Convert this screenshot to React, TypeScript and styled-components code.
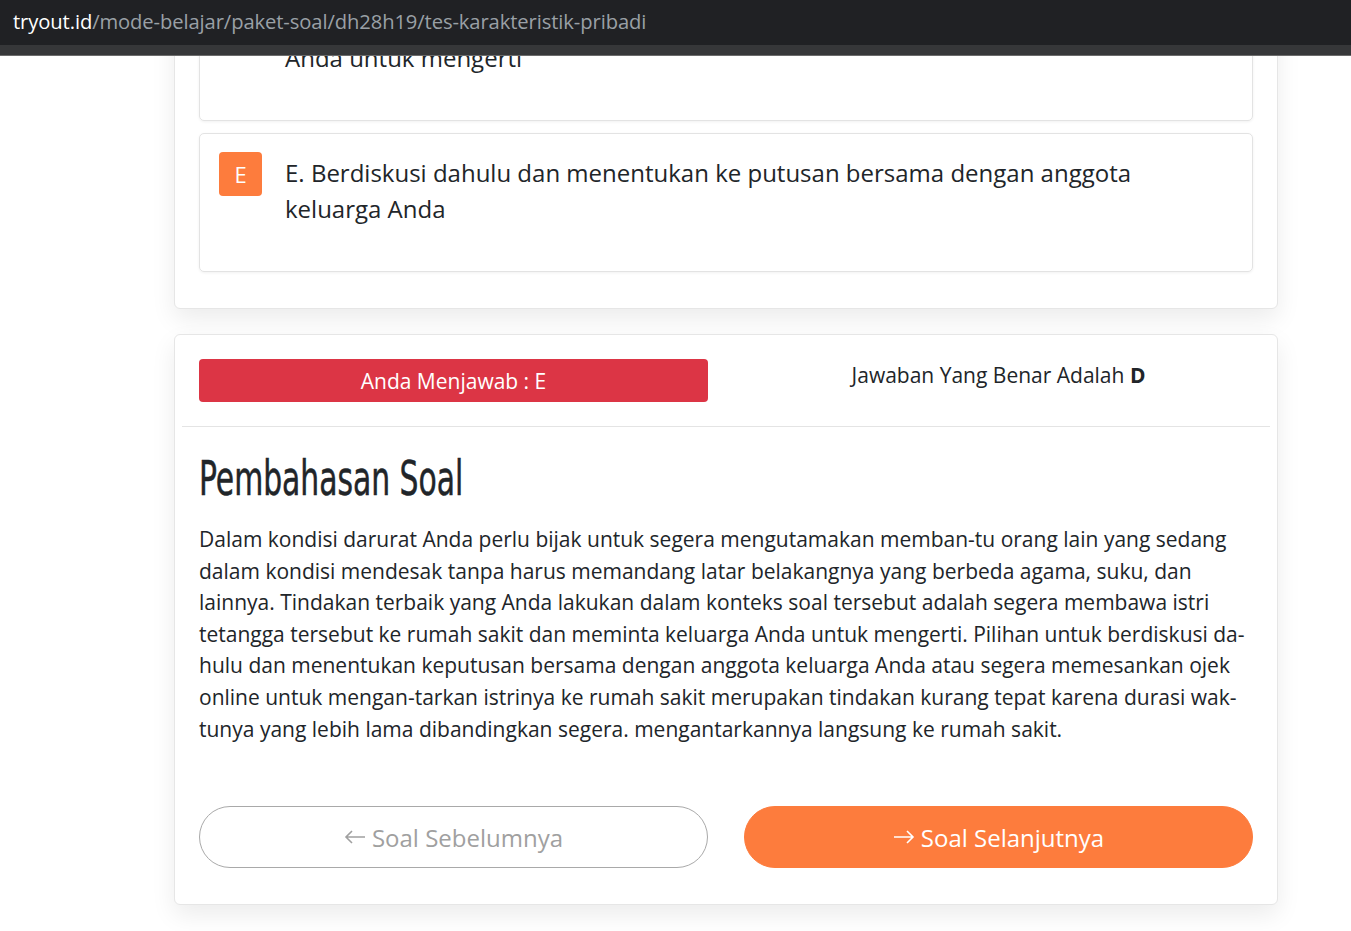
import { ReactNode, useLayoutEffect, useRef } from 'react';
import { createGlobalStyle, styled } from 'styled-components';

const GlobalStyle = createGlobalStyle`
  html, body {
    margin: 0;
    padding: 0;
    background: #fff;
    scroll-behavior: auto;
  }
  body {
    font-family: 'Open Sans', 'Noto Sans', sans-serif;
    color: #212529;
  }
  * {
    box-sizing: border-box;
  }
`;

const AddressBar = styled.div`
  position: fixed;
  top: 0;
  left: 0;
  right: 0;
  z-index: 10;
  height: 56px;
  background: #202124;
  border-bottom: 1px solid #6b6b6b;
  box-shadow: inset 0 -10px 0 #363739;
`;

const Url = styled.div`
  height: 42px;
  padding-left: 13px;
  display: flex;
  align-items: center;
  font-size: 20.2px;
  color: #9aa0a6;
  letter-spacing: -0.1px;
  span {
    color: #fff;
  }
`;

const Main = styled.main`
  width: 1104px;
  margin-left: 174px;
  padding: 120px 0 60px;
  display: flex;
  flex-direction: column;
  gap: 25px;
`;

const Card = styled.section<{ $bottom?: number }>`
  background: #fff;
  border: 1px solid #e6e6e6;
  border-radius: 6px;
  box-shadow: 0 10px 24px rgba(0, 0, 0, 0.08);
  padding: 24px 24px ${(p) => p.$bottom ?? 24}px;
`;

const QuestionHead = styled.h3`
  margin: 0 0 16px;
  font-size: 22px;
  font-weight: 600;
`;

const QuestionText = styled.p`
  margin: 0 0 24px;
  font-size: 21px;
  line-height: 34px;
`;

const Option = styled.div`
  display: flex;
  align-items: flex-start;
  gap: 23px;
  padding: 18px 20px 44px 19px;
  margin-bottom: 12px;
  border: 1px solid #e3e3e3;
  border-radius: 5px;
  box-shadow: 0 1px 3px rgba(0, 0, 0, 0.06);
`;

const Letter = styled.div<{ $active?: boolean }>`
  flex: 0 0 43px;
  height: 44px;
  border-radius: 4px;
  display: flex;
  align-items: center;
  justify-content: center;
  font-size: 22px;
  color: ${(p) => (p.$active ? '#fff' : '#212529')};
  background: ${(p) => (p.$active ? '#fd7c3d' : '#f1f1f1')};
`;

const OptionText = styled.div`
  margin-top: 3px;
  font-size: 24px;
  line-height: 36px;
  white-space: nowrap;
`;

const ResultRow = styled.div`
  display: grid;
  grid-template-columns: 1fr 1fr;
  gap: 36px;
  align-items: start;
`;

const Answered = styled.div`
  height: 43px;
  border-radius: 4px;
  background: #dc3545;
  color: #fff;
  font-size: 21px;
  display: flex;
  align-items: center;
  justify-content: center;
`;

const Correct = styled.div`
  text-align: center;
  font-size: 21px;
  line-height: 32px;
  b {
    font-weight: 700;
  }
`;

const Divider = styled.hr`
  border: 0;
  border-top: 1px solid #e4e4e4;
  margin: 24px -17px 23px;
`;

const Heading = styled.h2`
  margin: 0 0 17px;
  font-family: 'Liberation Sans Narrow', 'DejaVu Sans Condensed', 'Liberation Sans', sans-serif;
  font-size: 48px;
  font-weight: 400;
  line-height: 57px;
  color: #212529;
  -webkit-text-stroke: 0.5px #212529;
  display: inline-block;
  transform: scaleX(0.69);
  transform-origin: left center;
  white-space: nowrap;
`;

const Explanation = styled.p`
  margin: 0;
  font-size: 21px;
  line-height: 31.6px;
  white-space: nowrap;
`;

const Nav = styled.div`
  display: grid;
  grid-template-columns: 1fr 1fr;
  gap: 36px;
  margin-top: 61px;
`;

const NavButton = styled.button<{ $primary?: boolean }>`
  height: 62px;
  border-radius: 31px;
  font-family: 'Open Sans', sans-serif;
  font-size: 24px;
  cursor: pointer;
  display: flex;
  align-items: center;
  justify-content: center;
  gap: 6px;
  border: 1px solid ${(p) => (p.$primary ? '#fd7c3d' : '#a9a9a9')};
  background: ${(p) => (p.$primary ? '#fd7c3d' : '#fff')};
  color: ${(p) => (p.$primary ? '#fff' : '#a0a0a0')};
`;

const options: { key: string; lines: string[] }[] = [
  { key: 'A', lines: ['A. Membiarkan saja karena bukan urusan Anda'] },
  { key: 'B', lines: ['B. Menunggu suami tetangga tersebut pulang dari kantor'] },
  { key: 'C', lines: ['C. Segera memesankan ojek online untuk mengantarkan istrinya ke', 'rumah sakit'] },
  {
    key: 'D',
    lines: ['D. Segera membawa istri tetangga tersebut ke rumah sakit dan meminta keluarga', 'Anda untuk mengerti'],
  },
  {
    key: 'E',
    lines: ['E. Berdiskusi dahulu dan menentukan ke putusan bersama dengan anggota', 'keluarga Anda'],
  },
];

const explanation = [
  'Dalam kondisi darurat Anda perlu bijak untuk segera mengutamakan memban-tu orang lain yang sedang',
  'dalam kondisi mendesak tanpa harus memandang latar belakangnya yang berbeda agama, suku, dan',
  'lainnya. Tindakan terbaik yang Anda lakukan dalam konteks soal tersebut adalah segera membawa istri',
  'tetangga tersebut ke rumah sakit dan meminta keluarga Anda untuk mengerti. Pilihan untuk berdiskusi da-',
  'hulu dan menentukan keputusan bersama dengan anggota keluarga Anda atau segera memesankan ojek',
  'online untuk mengan-tarkan istrinya ke rumah sakit merupakan tindakan kurang tepat karena durasi wak-',
  'tunya yang lebih lama dibandingkan segera. mengantarkannya langsung ke rumah sakit.',
];

const Lines = ({ lines }: { lines: string[] }): ReactNode =>
  lines.map((l, i) => (
    <span key={i}>
      {l}
      {i < lines.length - 1 && <br />}
    </span>
  ));

const Arrow = ({ left }: { left?: boolean }) => (
  <svg width="22" height="16" viewBox="0 0 22 16" fill="none" stroke="currentColor" strokeWidth="1.6">
    {left ? <path d="M21 8H2M8 2L2 8l6 6" /> : <path d="M1 8h19M14 2l6 6-6 6" />}
  </svg>
);

const App = () => {
  const selectedRef = useRef<HTMLDivElement>(null);

  useLayoutEffect(() => {
    const place = () => {
      const el = selectedRef.current;
      if (!el) return;
      const top = el.getBoundingClientRect().top + window.scrollY;
      window.scrollTo(0, top - 133);
    };
    place();
    document.fonts?.ready.then(place);
    window.addEventListener('load', place);
    return () => window.removeEventListener('load', place);
  }, []);

  return (
    <>
      <GlobalStyle />
      <AddressBar>
        <Url>
          <span>tryout.id</span>/mode-belajar/paket-soal/dh28h19/tes-karakteristik-pribadi
        </Url>
      </AddressBar>
      <Main>
        <Card $bottom={24}>
          <QuestionHead>Soal No. 12</QuestionHead>
          <QuestionText>
            Istri tetangga Anda akan melahirkan, sementara suaminya sedang bekerja di luar kota. Tetangga Anda
            berbeda agama dan suku dengan Anda. Apa yang akan Anda lakukan?
          </QuestionText>
          {options.map((o) => (
            <Option key={o.key} ref={o.key === 'E' ? selectedRef : undefined}>
              <Letter $active={o.key === 'E'}>{o.key}</Letter>
              <OptionText>
                <Lines lines={o.lines} />
              </OptionText>
            </Option>
          ))}
        </Card>
        <Card $bottom={36}>
          <ResultRow>
            <Answered>Anda Menjawab : E</Answered>
            <Correct>
              Jawaban Yang Benar Adalah <b>D</b>
            </Correct>
          </ResultRow>
          <Divider />
          <Heading>Pembahasan Soal</Heading>
          <Explanation>
            <Lines lines={explanation} />
          </Explanation>
          <Nav>
            <NavButton>
              <Arrow left />
              Soal Sebelumnya
            </NavButton>
            <NavButton $primary>
              <Arrow />
              Soal Selanjutnya
            </NavButton>
          </Nav>
        </Card>
      </Main>
    </>
  );
};

export default App;
